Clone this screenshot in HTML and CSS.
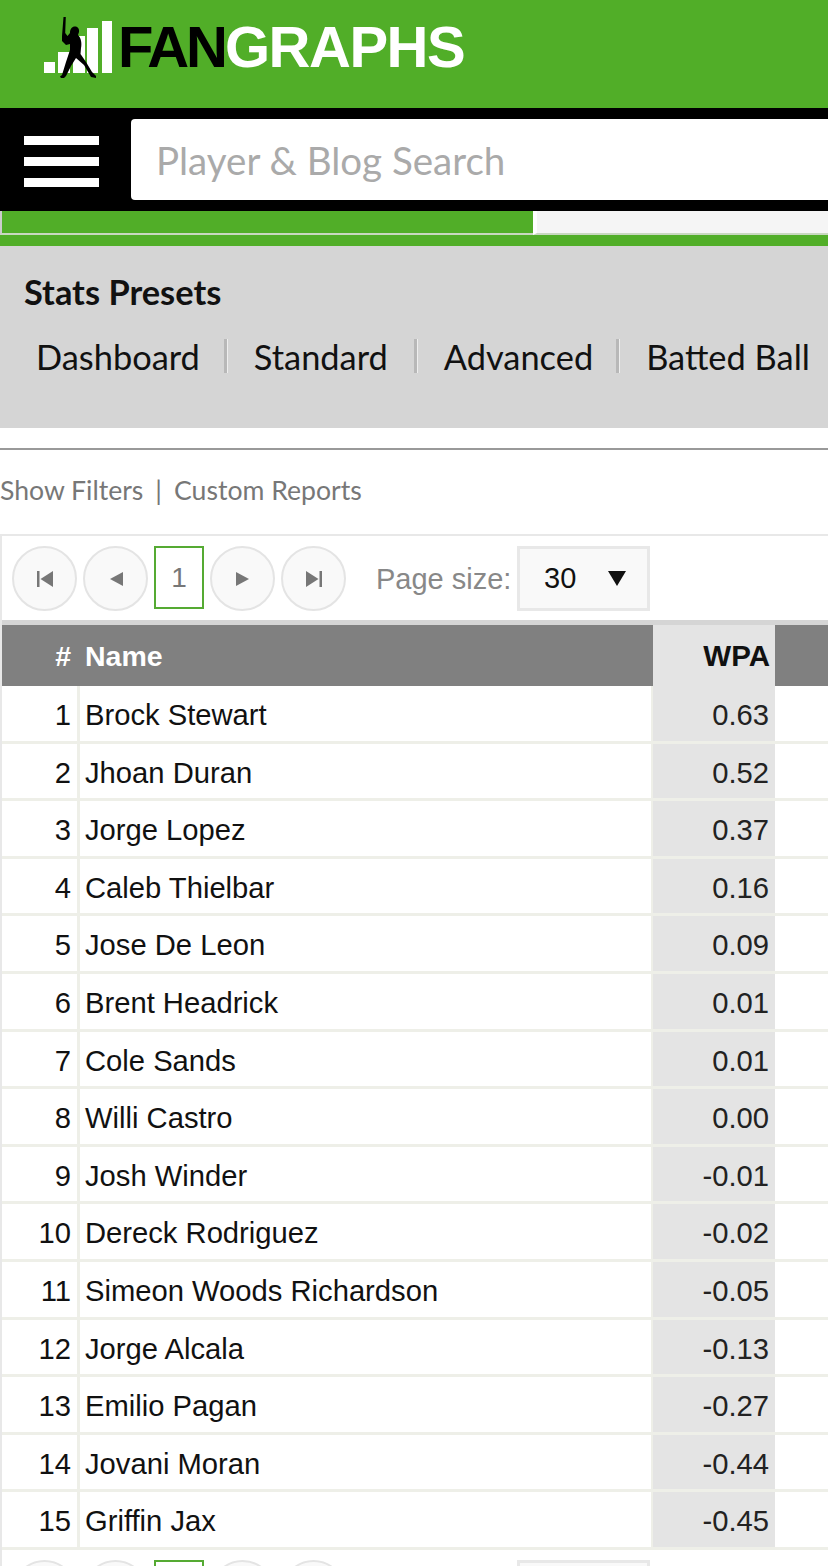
FILE: index.html
```html
<!DOCTYPE html>
<html lang="en">
<head>
    <meta charset="UTF-8">
    <meta name="viewport" content="width=device-width, initial-scale=1.0">
    <title>FanGraphs Stats</title>
    <link rel="stylesheet" href="styles.css">
</head>
<body>
<div class="page">
    <header class="brand">
        <svg class="brand-mark" width="70" height="62" viewBox="44 16 70 62" aria-hidden="true">
            <rect x="44" y="62" width="11" height="11" fill="#fff"/>
            <rect x="58" y="52" width="12" height="21" fill="#fff"/>
            <rect x="73" y="36" width="12" height="37" fill="#fff"/>
            <rect x="87" y="28" width="11" height="45" fill="#fff"/>
            <rect x="102" y="21" width="10" height="52" fill="#fff"/>
            <path fill="#000" d="M63.500 17 L65.800 17 L65.200 33 L67.500 36 L70 33 C70 29 72 26.500 75 26.500 C78 26.500 79.500 29 79 32 L78 35 C81 38 82 43 81 48 L80.500 54 L86 62 L92 72 L96 76 L96 78 L91 77 L84 65 L76 58 L71 66 L66 76 L64 78 L61 78 L60 76.500 L62 75 L66 62 L70 50 L70 44 L66 45 L62 41 L62 36 Z"/>
        </svg>
        <div class="brand-name"><span class="brand-fan">FAN</span>GRAPHS</div>
    </header>

    <div class="searchbar">
        <div class="burger"><span></span><span></span><span></span></div>
        <div class="search-box">Player &amp; Blog Search</div>
    </div>

    <div class="progress">
        <div class="progress-on"></div>
        <div class="progress-off"></div>
    </div>

    <section class="presets">
        <h2 class="presets-title">Stats Presets</h2>
        <nav class="presets-links">
            <a class="preset-dashboard">Dashboard</a>
            <a class="preset-standard">Standard</a>
            <a class="preset-advanced">Advanced</a>
            <a>Batted Ball</a>
        </nav>
    </section>

    <div class="filters">Show Filters<span class="filters-sep">|</span>Custom Reports</div>

    <div class="grid">
        <div class="pager">
            <button class="pg-btn"><svg width="18" height="18" viewBox="0 0 18 18"><path fill="#777" d="M1 1h2.500v16H1zM17 1v16L4.500 9z"/></svg></button>
            <button class="pg-btn"><svg width="18" height="18" viewBox="0 0 18 18"><path fill="#777" d="M16 2v14L3 9z"/></svg></button>
            <span class="pg-current">1</span>
            <button class="pg-btn"><svg width="18" height="18" viewBox="0 0 18 18"><path fill="#777" d="M2 2v14l13-7z"/></svg></button>
            <button class="pg-btn"><svg width="18" height="18" viewBox="0 0 18 18"><path fill="#777" d="M1 1v16l12.500-8zM14.500 1H17v16h-2.500z"/></svg></button>
            <span class="pg-label">Page size:</span>
            <div class="pg-select"><span>30</span><span class="pg-arrow"></span></div>
        </div>

        <div class="row head">
            <div class="num">#</div>
            <div class="name">Name</div>
            <div class="stat">WPA</div>
            <div class="rest"></div>
        </div>
        <div class="row"><div class="num">1</div><div class="name">Brock Stewart</div><div class="stat">0.63</div><div class="rest"></div></div>
        <div class="row"><div class="num">2</div><div class="name">Jhoan Duran</div><div class="stat">0.52</div><div class="rest"></div></div>
        <div class="row"><div class="num">3</div><div class="name">Jorge Lopez</div><div class="stat">0.37</div><div class="rest"></div></div>
        <div class="row"><div class="num">4</div><div class="name">Caleb Thielbar</div><div class="stat">0.16</div><div class="rest"></div></div>
        <div class="row"><div class="num">5</div><div class="name">Jose De Leon</div><div class="stat">0.09</div><div class="rest"></div></div>
        <div class="row"><div class="num">6</div><div class="name">Brent Headrick</div><div class="stat">0.01</div><div class="rest"></div></div>
        <div class="row"><div class="num">7</div><div class="name">Cole Sands</div><div class="stat">0.01</div><div class="rest"></div></div>
        <div class="row"><div class="num">8</div><div class="name">Willi Castro</div><div class="stat">0.00</div><div class="rest"></div></div>
        <div class="row"><div class="num">9</div><div class="name">Josh Winder</div><div class="stat">-0.01</div><div class="rest"></div></div>
        <div class="row"><div class="num">10</div><div class="name">Dereck Rodriguez</div><div class="stat">-0.02</div><div class="rest"></div></div>
        <div class="row"><div class="num">11</div><div class="name">Simeon Woods Richardson</div><div class="stat">-0.05</div><div class="rest"></div></div>
        <div class="row"><div class="num">12</div><div class="name">Jorge Alcala</div><div class="stat">-0.13</div><div class="rest"></div></div>
        <div class="row"><div class="num">13</div><div class="name">Emilio Pagan</div><div class="stat">-0.27</div><div class="rest"></div></div>
        <div class="row"><div class="num">14</div><div class="name">Jovani Moran</div><div class="stat">-0.44</div><div class="rest"></div></div>
        <div class="row"><div class="num">15</div><div class="name">Griffin Jax</div><div class="stat">-0.45</div><div class="rest"></div></div>

        <div class="pager">
            <button class="pg-btn"></button>
            <button class="pg-btn"></button>
            <span class="pg-current"></span>
            <button class="pg-btn"></button>
            <button class="pg-btn"></button>
            <span class="pg-label"></span>
            <div class="pg-select"></div>
        </div>
    </div>
</div>
</body>
</html>
```

FILE: styles.css
```css
html, body {
    margin: 0;
    padding: 0;
    background-color: #fff;
}
.page {
    width: 828px;
    height: 1566px;
    overflow: hidden;
    font-family: "Liberation Sans", Arial, sans-serif;
}

/* top bars */
.brand {
    height: 108px;
    background-color: #51ae28;
    display: flex;
    align-items: flex-start;
    padding-left: 44px;
    box-sizing: border-box;
}
.brand-mark {
    margin-top: 16px;
    flex: none;
}
.brand-name {
    margin: 14px 0 0 4px;
    font-size: 58px;
    line-height: 66px;
    font-weight: bold;
    letter-spacing: -1.5px;
    color: #fff;
}
.brand-fan {
    color: #000;
    letter-spacing: -3px;
}
.searchbar {
    height: 103px;
    background-color: #000;
    display: flex;
    align-items: flex-start;
}
.burger {
    width: 131px;
    padding: 28px 0 0 24px;
    box-sizing: border-box;
    flex: none;
}
.burger span {
    display: block;
    width: 75px;
    height: 9px;
    background-color: #fff;
    margin-bottom: 12px;
}
.search-box {
    flex: 1;
    height: 81px;
    margin-top: 11px;
    padding-left: 25px;
    background-color: #fff;
    border-radius: 4px 0 0 4px;
    font-family: Lato, sans-serif;
    font-size: 38.5px;
    line-height: 83px;
    color: #aaa;
}
.progress {
    height: 35px;
    padding-bottom: 11px;
    box-sizing: border-box;
    display: flex;
    background-color: #51ae28;
}
.progress-on {
    width: 533px;
    box-sizing: border-box;
    border-left: 2px solid #ccc;
    border-bottom: 2px solid #c8d8c0;
}
.progress-off {
    flex: 1;
    border-left: 4px solid #fff;
    background-color: #f5f5f5;
    border-bottom: 2px solid #c8d8c0;
}

/* presets */
.presets {
    height: 182px;
    background-color: #d5d5d5;
    overflow: hidden;
}
.presets-title {
    margin: 27px 0 0 24px;
    font-family: Lato, sans-serif;
    font-size: 34.4px;
    line-height: 38px;
    font-weight: bold;
    color: #111;
}
.presets-links {
    display: flex;
    margin: 27px 0 0 36px;
    font-family: Lato, sans-serif;
    font-size: 34.4px;
    line-height: 38px;
    color: #111;
}
.presets-links a {
    position: relative;
    white-space: nowrap;
}
.presets-links a + a::before {
    content: "";
    position: absolute;
    left: -30px;
    top: 1px;
    width: 4px;
    height: 34px;
    background-color: #b8b8b8;
    border-right: 1px solid #eee;
    box-sizing: border-box;
}
.preset-dashboard { margin-right: 54px; }
.preset-standard { margin-right: 56px; }
.preset-advanced { margin-right: 53px; }

.filters {
    margin-top: 20px;
    height: 84px;
    border-top: 2px solid #999;
    font-family: Lato, sans-serif;
    font-size: 26.6px;
    line-height: 80px;
    color: #777;
}
.filters-sep {
    margin: 0 12px;
}

/* table */
.grid {
    border-top: 2px solid #e8e8e8;
    border-left: 2px solid #e8e8e8;
}
.pager {
    height: 89px;
    box-sizing: border-box;
    border-bottom: 5px solid #d5d5d5;
    display: flex;
    align-items: flex-start;
    padding: 10px 0 0 10px;
}
.pg-btn {
    width: 65px;
    height: 65px;
    padding: 0;
    border: 2px solid #e4e4e4;
    border-radius: 50%;
    background-color: #f9f9f9;
    margin-right: 6px;
    display: flex;
    align-items: center;
    justify-content: center;
    flex: none;
}
.pg-current {
    width: 50px;
    height: 63px;
    box-sizing: border-box;
    border: 2px solid #55aa33;
    margin-right: 6px;
    text-align: center;
    font-size: 28px;
    line-height: 60px;
    color: #777;
    flex: none;
}
.pg-label {
    margin-left: 24px;
    width: 141px;
    font-size: 29px;
    line-height: 66px;
    color: #888;
    white-space: nowrap;
    flex: none;
}
.pg-select {
    width: 133px;
    height: 65px;
    box-sizing: border-box;
    border: 3px solid #e8e8e8;
    background-color: #f9f9f9;
    padding: 0 21px 0 24px;
    display: flex;
    justify-content: space-between;
    align-items: center;
    font-size: 29px;
    color: #111;
    flex: none;
}
.pg-arrow {
    width: 0;
    height: 0;
    border-left: 9px solid transparent;
    border-right: 9px solid transparent;
    border-top: 15px solid #111;
}
.row {
    display: grid;
    grid-template-columns: 78px 573px 122px 1fr;
    grid-template-rows: 57.6px;
    font-size: 29.2px;
    color: #111;
}
.row > div {
    box-sizing: border-box;
    border-bottom: 3px solid #eeefe8;
    line-height: 58.6px;
    white-space: nowrap;
}
.num {
    text-align: right;
    padding-right: 6px;
    border-right: 3px solid #eeefe8;
}
.name {
    padding-left: 5px;
    border-right: 2px solid #eeefe8;
}
.stat {
    text-align: right;
    padding-right: 6px;
    background-color: #e4e4e4;
    color: #222;
}
.row.head {
    grid-template-rows: 61px;
    font-weight: bold;
    font-size: 28.5px;
}
.row.head > div {
    border: 0;
    line-height: 62px;
    background-color: #808080;
    color: #fff;
}
.row.head .num {
    padding-right: 9px;
}
.row.head .stat {
    background-color: #e4e4e4;
    color: #111;
    font-size: 29.500px;
    padding-right: 5px;
}
```
